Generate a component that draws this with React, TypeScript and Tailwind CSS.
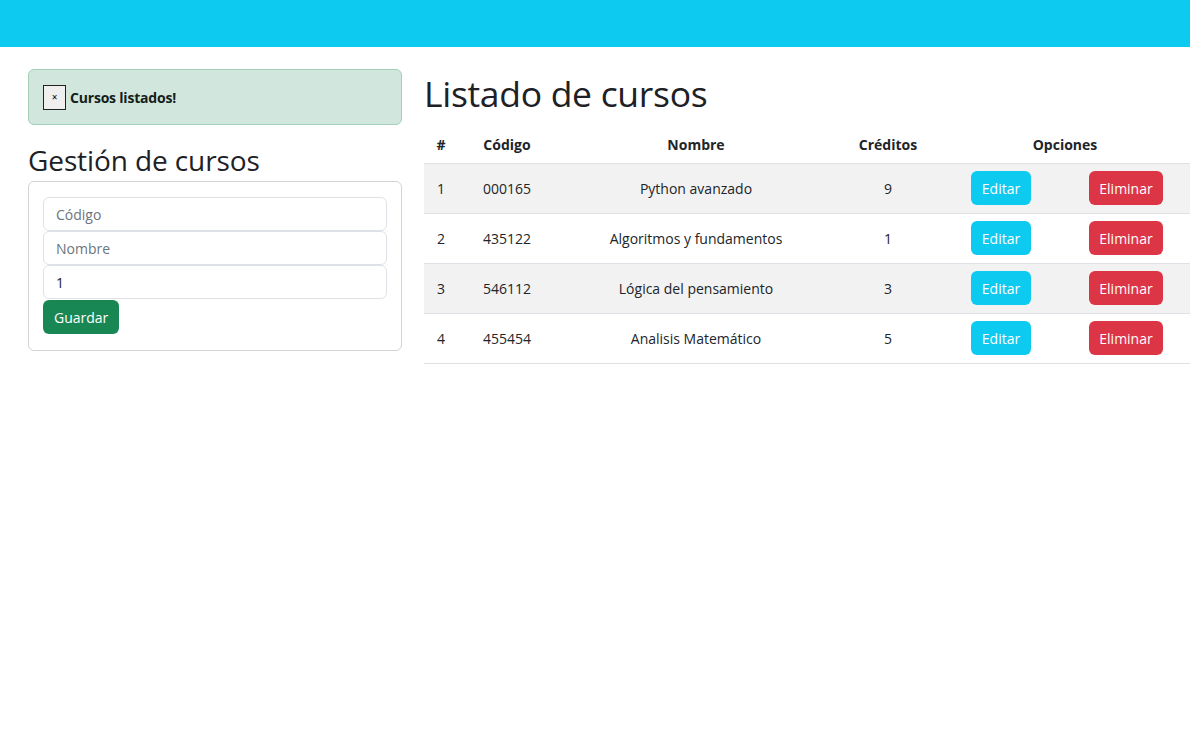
import React from 'react';

interface Curso {
  codigo: string;
  nombre: string;
  creditos: number;
}

const cursos: Curso[] = [
  { codigo: '000165', nombre: 'Python avanzado', creditos: 9 },
  { codigo: '435122', nombre: 'Algoritmos y fundamentos', creditos: 1 },
  { codigo: '546112', nombre: 'Lógica del pensamiento', creditos: 3 },
  { codigo: '455454', nombre: 'Analisis Matemático', creditos: 5 },
];

function App() {
  return (
    <div className="min-h-screen bg-white text-[#212529] text-[14px] font-['Open_Sans',sans-serif]">
      {/* Navbar */}
      <nav className="h-[47px] bg-[#0dcaf0]" />

      <div className="flex gap-[22px] pl-[28px] pt-[22px]">
        {/* Left column */}
        <div className="w-[374px] flex-shrink-0">
          <div className="h-[56px] flex items-center px-[14px] bg-[#d1e7dd] border border-[#a3cfbb] rounded-[6px]">
            <button className="w-[23px] h-[25px] bg-[#efefef] border border-[#222] text-[10px] leading-none text-black flex items-center justify-center">
              ×
            </button>
            <span className="ml-[4px] font-bold text-[#14201a] tracking-[-0.2px]">Cursos listados!</span>
          </div>

          <h2 className="mt-[16px] h-[38px] leading-[38px] text-[28px] font-normal tracking-[-0.1px] text-[#1d2125]">Gestión de cursos</h2>

          <div className="mt-[2px] border border-[#d3d3d3] rounded-[6px] px-[14px] pt-[15px] pb-[16px]">
            <input
              className="block w-full h-[34px] px-[12px] border border-[#dee2e6] rounded-[6px] outline-none placeholder:text-[#6c757d]"
              placeholder="Código"
            />
            <input
              className="block w-full h-[34px] px-[12px] border border-[#dee2e6] rounded-[6px] outline-none placeholder:text-[#6c757d]"
              placeholder="Nombre"
            />
            <input
              className="block w-full h-[34px] px-[12px] border border-[#dee2e6] rounded-[6px] outline-none text-[#212529]"
              defaultValue="1"
            />
            <button className="mt-[1px] h-[34px] px-[11px] bg-[#198754] text-white rounded-[6px]">Guardar</button>
          </div>
        </div>

        {/* Right column */}
        <div className="flex-1">
          <h1 className="h-[48px] leading-[48px] text-[35.5px] font-normal tracking-[-0.3px] text-[#1d2125]">Listado de cursos</h1>
          <table className="mt-[9px] w-full table-fixed border-collapse text-center">
            <colgroup>
              <col className="w-[34px]" />
              <col className="w-[98px]" />
              <col className="w-[280px]" />
              <col className="w-[104px]" />
              <col className="w-[122px]" />
              <col className="w-[128px]" />
            </colgroup>
            <thead>
              <tr className="h-[37px] border-b border-[#dee2e6]">
                <th className="font-bold">#</th>
                <th className="font-bold">Código</th>
                <th className="font-bold">Nombre</th>
                <th className="font-bold">Créditos</th>
                <th className="font-bold" colSpan={2}>Opciones</th>
              </tr>
            </thead>
            <tbody>
              {cursos.map((c, i) => (
                <tr key={c.codigo} className={`h-[50px] border-b border-[#dee2e6] ${i % 2 === 0 ? 'bg-[#f2f2f2]' : 'bg-white'}`}>
                  <td>{i + 1}</td>
                  <td>{c.codigo}</td>
                  <td>{c.nombre}</td>
                  <td>{c.creditos}</td>
                  <td>
                    <button className="h-[34px] px-[11px] bg-[#0dcaf0] text-white rounded-[6px]">Editar</button>
                  </td>
                  <td>
                    <button className="h-[34px] px-[10px] bg-[#dc3545] text-white rounded-[6px]">Eliminar</button>
                  </td>
                </tr>
              ))}
            </tbody>
          </table>
        </div>
      </div>
    </div>
  );
}

export default App;
